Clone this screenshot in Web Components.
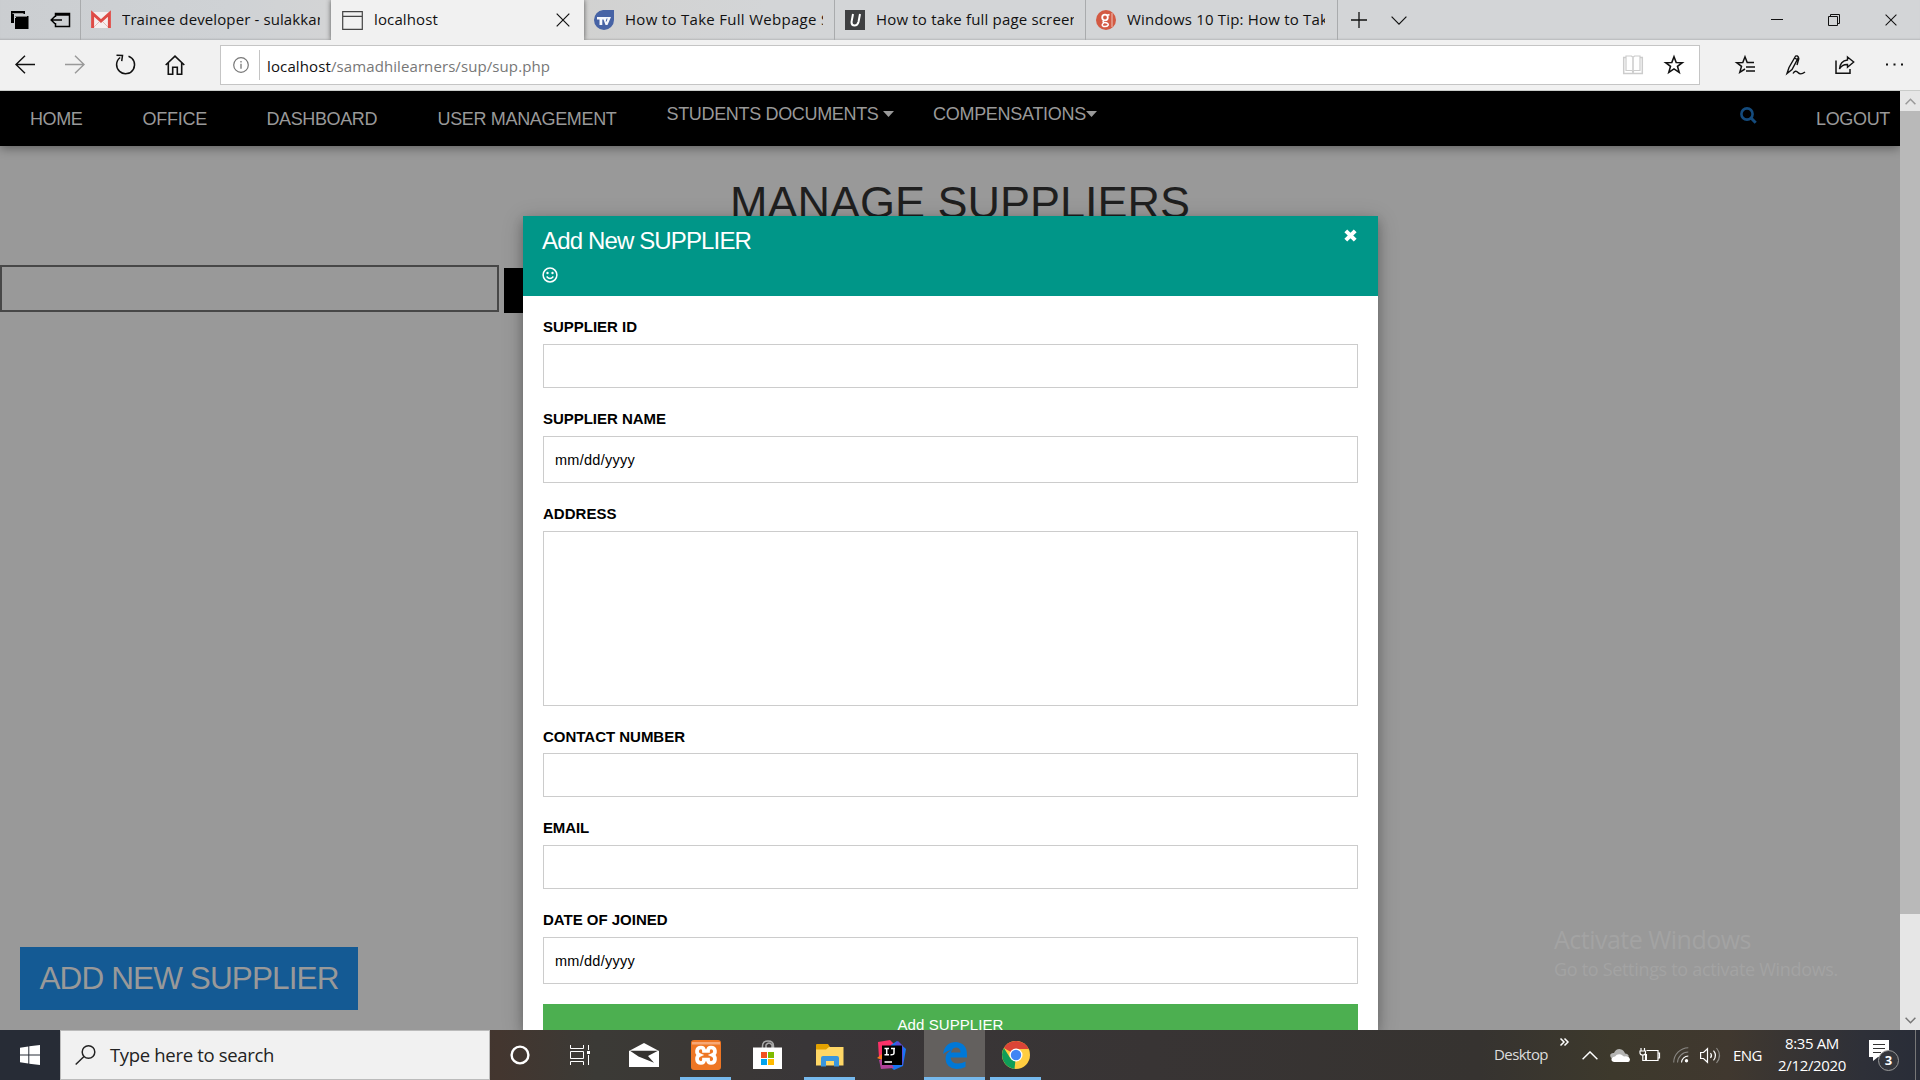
<!DOCTYPE html>
<html lang="en"><head><meta charset="utf-8"><title>localhost</title>
<style>
html,body{margin:0;height:100%;overflow:hidden}
body{font-family:"Liberation Sans",Arial,sans-serif;color:#000}
</style></head><body>
<desktop-screen></desktop-screen>
<script>
const UI='"Open Sans","Noto Sans",sans-serif';
const define=(name,html,after)=>customElements.define(name,class extends HTMLElement{
  connectedCallback(){
    if(this.shadowRoot)return;
    const t=document.createElement('template');
    t.innerHTML=typeof html==='function'?html(this):html;
    this.attachShadow({mode:'open'}).append(t.content.cloneNode(true));
    if(after)after(this);
  }
});

/* Single line of text tracked to a set width: w = text width, box = clip width, gap = space before */
define('fit-text',e=>`<style>
:host{display:block;flex:none;box-sizing:border-box;white-space:nowrap;overflow:${e.hasAttribute('box')?'hidden':'visible'};
width:${e.getAttribute('box')||e.getAttribute('w')}px;margin-left:${e.getAttribute('gap')||0}px;font-size:${e.getAttribute('size')||15}px}
span{display:inline-block;white-space:pre}</style><span><slot></slot></span>`,e=>{
  const s=e.shadowRoot.querySelector('span'),n=e.textContent.length;
  s.style.letterSpacing=((+e.getAttribute('w')-s.getBoundingClientRect().width)/n)+'px';
});

const S='fill="none" stroke="currentColor"';
const ICONS={
tabs:[20,20,`<path d="M1 1h14v3H4v9H1z"/><path d="M6 6h12.500v13H5V8h1z"/><path d="M2.500 3.500h11" stroke="#999" stroke-width="1"/><path d="M5 6.500h12" stroke="#777" stroke-width="1"/>`],
aside:[20,16,`<path d="M5.500 5V1.500h14v13h-14V11M5.500 3h14" ${S} stroke-width="1.500"/><path d="M12 8H1M5 4.300L1.200 8 5 11.700" ${S} stroke-width="1.500"/>`],
gmail:[20,16,`<rect width="20" height="16" rx="1.500" fill="#f5eeee"/><path d="M1.600 16V1.500L10 9l8.400-7.500V16" fill="none" stroke="#de4b46" stroke-width="3"/><path d="M3 15l5-5M17 15l-5-5" stroke="#e6b5b2"/>`],
page:[21,19,`<path d="M.7.700h19.600v17.600H.7zM.7 5.300h19.600" fill="none" stroke="#444" stroke-width="1.200"/>`],
x:[14,14,`<path d="M.7.700l12.600 12.600M13.300.700L.7 13.300" ${S} stroke-width="1.200"/>`],
tv:[20,20,`<path d="M9 0h11v10a10 10 0 0 1-20 0A10 10 0 0 1 9 0z" fill="#4763a5"/><path d="M3 7h14l-3.500 8h-2L9.500 9.500H8.300V15H5.500V9.500H3z" fill="#f5f7fb"/><path d="M13 8.500l-.8 3" stroke="#4763a5"/>`],
u:[20,20,`<path d="M0 0h20v20H0z" fill="#3f4042"/><path d="M8 4L6.500 12q0 3.500 3 3.500t4-3.500L15 4" fill="none" stroke="#fff" stroke-width="2"/>`],
g:[20,20,`<circle cx="10" cy="10" r="10" fill="#d35a43"/><circle cx="9" cy="7.500" r="2.800" fill="none" stroke="#fff" stroke-width="1.800"/><path d="M11 5.500l2.500-1M8 10.500q-2 1.500 0 2 5 .3 4.200 2.500-1.200 2-4.500 1.500-3-1.200 0-3.500" fill="none" stroke="#fff" stroke-width="1.500"/><path d="M16 3v14" stroke="#f0c3b8"/>`],
plus:[16,16,`<path d="M8 0v16M0 8h16" ${S} stroke-width="1.300"/>`],
down:[16,9,`<path d="M.6.700L8 8.100l7.400-7.400" ${S} stroke-width="1.200"/>`],
min:[12,12,`<path d="M0 5.500h12" ${S}/>`],
restore:[12,12,`<path d="M.5 2.500h9v9h-9zM2.500 2V.500h9v9H10" ${S}/>`],
back:[20,19,`<path d="M20 9.500H1M10 .7L1 9.500l9 8.800" ${S} stroke-width="1.400"/>`],
fwd:[20,19,`<path d="M0 9.500h19M10 .7l9 8.800-9 8.800" ${S} stroke-width="1.400"/>`],
reload:[20,21,`<path d="M13.500 2.200A9 9 0 1 1 5.200 3.500" ${S} stroke-width="1.500"/><path d="M1.500 1.200l6 .3-.8 5.700" ${S} stroke-width="1.500"/>`],
home:[20,20,`<path d="M.7 10L10 1.200 19.300 10M3.300 8v11.200h4.400v-7h4.600v7h4.400V8" ${S} stroke-width="1.600"/>`],
info:[16,16,`<circle cx="8" cy="8" r="7.300" ${S} stroke-width="1.200"/><path d="M8 6.800v5M8 4v1.400" ${S} stroke-width="1.300"/>`],
book:[20,20,`<path d="M3 2.500H.7v16h18.600v-16H17M10 3v15" ${S} stroke-width="1.500"/><path d="M3 1h5.500L10 2.500 11.500 1H17v14.500h-6L10 17l-1-1.500H3z" ${S} stroke-width="1.200"/>`],
star:[20,19,`<path d="M10 1.800l2.200 5.700 6.100.2-4.800 3.700 1.700 5.900-5.200-3.400-5.200 3.400 1.700-5.900L1.700 7.700l6.100-.2z" ${S} stroke-width="1.600"/>`],
fav:[20,19,`<path d="M19 7.500h-6.800L10 1.800 7.800 7.500l-6.100.2 4.800 3.700-1.700 5.900L10 14M11 12h9M11 16h9" ${S} stroke-width="1.500"/>`],
pen:[20,20,`<path d="M1 18.500l2-6L9.500 1.200q2-1 3 1.200L6 14.500l-5 4zM8.500 3l3 1.700M13 3l-2 7M7 18.500q2.500-4 5-1t7-.5" ${S} stroke-width="1.400"/>`],
share:[20,18,`<path d="M1 4.500v12.800h14V13" ${S} stroke-width="1.500"/><path d="M12.500 1l6.200 5-6.200 5.200V8.500Q7 8.300 4.500 13 5 5 12.500 4z" ${S} stroke-width="1.400"/>`],
dots:[19,3,`<path d="M1 .500h2v2H1zM8.500.500h2v2h-2zM16 .500h2v2h-2z"/>`],
caret:[11,6,`<path d="M0 0h11L5.500 6z"/>`],
find:[17,17,`<circle cx="7" cy="7" r="5.600" ${S} stroke-width="2.600"/><path d="M11 11l4.700 4.700" ${S} stroke-width="3"/>`],
smile:[16,16,`<circle cx="8" cy="8" r="6.900" ${S} stroke-width="1.500"/><circle cx="5.500" cy="6" r="1.200"/><circle cx="10.500" cy="6" r="1.200"/><path d="M4.600 9.500q3.400 4 6.800 0" ${S} stroke-width="1.400"/>`],
close:[13,13,`<path d="M1.800 1.800l9.400 9.400M11.200 1.800L1.800 11.200" ${S} stroke-width="4"/>`],
up:[11,7,`<path d="M.6 6.200l4.900-5 4.900 5" ${S} stroke-width="1.500"/>`],
dn:[11,7,`<path d="M.6.800l4.900 5 4.900-5" ${S} stroke-width="1.500"/>`],
win:[20,20,`<path d="M0 2.700L8.300 1.500v8H0zM9.300 1.300L20 0v9.500H9.300zM0 10.500h8.300v8L0 17.300zM9.300 10.500H20V20L9.300 18.700z"/>`],
lens:[21,20,`<circle cx="13.500" cy="7" r="6.300" ${S} stroke-width="1.500"/><path d="M9 11.500L.7 19.500" ${S} stroke-width="1.500"/>`],
cortana:[20,20,`<circle cx="10" cy="10" r="8.400" ${S} stroke-width="2.400"/>`],
tasks:[21,20,`<path d="M.5 0v3.500h13V0M.5 20v-3.500h13V20M.5 6.500h13v7H.5zM18.500 0v5M18.500 10v10" ${S}/><path d="M17 6h3v3h-3z"/>`],
mail:[30,24,`<path d="M0 8L15 0l15 8v16H0z"/><path d="M1 7.800h28L19 13l6 6.700L9.500 13.500z" fill="#34322f"/>`],
xampp:[30,30,`<rect width="30" height="30" rx="3" fill="#ee7624"/><path d="M1 2h28v2.500H1z" fill="#f7a877"/><path d="M10 7.500c-5 0-5 6-1.500 7.500-3.500 1.500-3.500 8 1.500 8q3 0 3-3.500h4q0 3.500 3 3.500c5 0 5-6.500 1.500-8C25 13.500 25 7.500 20 7.500q-3 0-3 3.500h-4q0-3.500-3-3.500z" fill="none" stroke="#fff" stroke-width="3.700"/>`],
store:[30,30,`<path d="M9.500 9V6q0-5 5.500-5t5.500 5v3M13 8V5q3-4 6 0v3" fill="none" stroke="#aaa" stroke-width="1.500"/><path d="M0 7.500h29v21.500H0z"/><path fill="#f25022" d="M8 12h6v6H8z"/><path fill="#7fba00" d="M15 12h6v6h-6z"/><path fill="#00a4ef" d="M8 19h6v6H8z"/><path fill="#ffb900" d="M15 19h6v6h-6z"/>`],
folder:[28,24,`<path d="M0 2q0-1 1-1h11l2 3h13v18H0z" fill="#e2a100"/><path d="M0 6.500h10l3-2.500h14.500v18.500H0z" fill="#ffd766"/><path d="M5 23.500V15q0-2 2-2h14q2 0 2 2v8.500h-5V18h-8v5.500z" fill="#3a96dd"/>`],
ij:[30,30,`<path d="M1 2L13 0l5 5-2 10L2 18z" fill="#fc3168"/><path d="M14 5l6-4 9 8-3 17-9 4-6-5z" fill="#1775f5"/><path d="M18 4l3-3 5 5v20z" fill="#5a4bd6"/><path d="M0 18l5-4v6z" fill="#f97a20"/><path d="M2 20l9-2 6 10-13 1z" fill="#b0409a"/><path d="M5 5.500h20v19.500H5z" fill="#000"/><path d="M7.500 8.500h4.500M9.700 8.500v6M7.500 14.800h4.500M14 8.500h4M17 8.500V13q0 2-3.500 1.700M7.500 22h7.500" fill="none" stroke="#fff" stroke-width="1.500"/>`],
edge:[26,28,`<path d="M1 13Q3 1 14 1q11 1 11 13v2.500H8.500q.5 6 7.500 6 4 0 7.500-2V26q-4 2-9 2-10.500-1-11-10Q3.500 11.500 10 9 6 9 1 13zm8-1.500h9.500q0-5-4.700-5-4 .5-4.800 5z" fill="#0078d7"/>`],
chrome:[28,28,`<circle cx="14" cy="14" r="14" fill="#ffcd40"/><path d="M14 14L1.900 7A14 14 0 0 1 26.700 8H14z" fill="#db4437"/><path d="M14 14l-1.500 13.900A14 14 0 0 1 1.900 7L8.500 17.500z" fill="#0f9d58"/><circle cx="14" cy="14" r="6.500" fill="#fff"/><circle cx="14" cy="14" r="5.200" fill="#4285f4"/>`],
more:[9,8,`<path d="M.5.500L4 4 .5 7.500M4.500.500L8 4 4.500 7.500" ${S} stroke-width="1.500"/>`],
cloud:[20,13,`<path d="M4 10Q-.5 9 .3 5.500 1.500 3.500 4 4 6-.5 10.500.2 14 1 15 4.500q3 0 4 3z" fill="#b4b4b2"/><path d="M4 13Q1 12.500 1.500 9.500 3 7.500 5 7.500 7 4.500 11 5.500l3 2q5-1 6 3-.3 2.500-2 2.500z"/>`],
battery:[20,14,`<path d="M6.500 2.500h11.500v10H5.500V9M18.500 5h1v5h-1M1 0v2.500M4.500 0v2.500M0 3h5.500v2q0 2-2.700 2T0 5zM2.800 7v5.500H6" ${S} stroke-width="1.200"/><path d="M5 6h2v6H5z"/>`],
wifi:[16,16,`<path d="M.7 15.500A15 15 0 0 1 15.300.700M4.500 15.500A11 11 0 0 1 15.300 5" ${S} style="stroke:#8a8884" stroke-width="1.100"/><path d="M8.500 15.500a7 7 0 0 1 6.800-6.500" ${S} stroke-width="1.100"/><circle cx="13.500" cy="13.800" r="1.700"/>`],
sound:[21,17,`<path d="M.6 5.500H3.500L7.500 1.700v13.600L3.500 11.500H.6z" ${S} stroke-width="1.200"/><path d="M10.500 6q2 2.500 0 5M13.500 3.700q4 4.800 0 9.600" ${S} stroke-width="1.200"/><path d="M16.500 1q6 7.500 0 15" ${S} style="stroke:#8a8884" stroke-width="1.200"/>`]
};
/* Vector icon: name picks the drawing, gap = space before, w/h override the drawn size */
define('ui-icon',e=>{const[w,h,p]=ICONS[e.getAttribute('name')],W=e.getAttribute('w')||w,H=e.getAttribute('h')||h;
return`<style>:host{display:block;flex:none;width:${W}px;height:${H}px;margin-left:${e.getAttribute('gap')||0}px}svg{display:block;overflow:visible}</style><svg width="${W}" height="${H}" viewBox="0 0 ${w} ${h}" fill="currentColor">${p}</svg>`});

define('browser-tab',e=>`<style>
:host{display:flex;align-items:center;flex:none;box-sizing:border-box;width:${e.getAttribute('width')}px;height:40px;padding-left:11px;border-right:1px solid #a9abad}
:host([active]){background:#f1f1f1;border:0;box-shadow:0 0 5px #0009;clip-path:inset(0 -6px 0 -6px)}
::slotted(fit-text){padding-bottom:2px}
</style><ui-icon name="${e.getAttribute('icon')}"></ui-icon><slot></slot>`);

define('tab-strip',`<style>
:host{display:flex;align-items:center;height:40px;font-family:${UI};color:#111;background:linear-gradient(90deg,#cbced1,#cfd2d5 12%,#d3d4d5 17%,#d0ceca 20%,#d3d5d7 40%,#d3d5d7);box-shadow:inset 0 -2px 2px -1px #0002}
.left{display:flex;align-items:center;box-sizing:border-box;width:81px;height:40px;border-right:1px solid #a9abad;color:#000}
</style>
<div class="left"><ui-icon name="tabs" gap="10"></ui-icon><ui-icon name="aside" gap="20"></ui-icon></div>
<browser-tab width="250" icon="gmail" style="border:0;padding-left:10px"><fit-text gap="11" w="201" box="198">Trainee developer - sulakkar</fit-text></browser-tab>
<browser-tab active width="253" icon="page" style="z-index:1"><fit-text gap="11" w="64">localhost</fit-text><ui-icon name="x" gap="118"></ui-icon></browser-tab>
<browser-tab width="251" icon="tv" style="padding-left:10px"><fit-text gap="11" w="204.500" box="198">How to Take Full Webpage S</fit-text></browser-tab>
<browser-tab width="251" icon="u" style="padding-left:10px"><fit-text gap="11" w="203" box="198">How to take full page screen</fit-text></browser-tab>
<browser-tab width="252" icon="g" style="padding-left:10px"><fit-text gap="11" w="201" box="198">Windows 10 Tip: How to Tak</fit-text></browser-tab>
<ui-icon name="plus" gap="13"></ui-icon><ui-icon name="down" gap="24"></ui-icon>
<ui-icon name="min" gap="364"></ui-icon><ui-icon name="restore" gap="45"></ui-icon><ui-icon name="x" w="12" h="12" gap="45"></ui-icon>`);

define('address-bar',`<style>
:host{display:flex;align-items:center;height:50px;border-bottom:1px solid #c9cbc9;background:#f1f1f1;font-family:${UI};color:#111}
.box{display:flex;align-items:center;box-sizing:border-box;width:1480px;height:40px;border:1px solid #c5c5c5;background:#fff;margin-left:35px}
.box i{width:1px;height:30px;background:#c4c4c4;margin-left:10px}
.g{color:#777}
.box fit-text{padding-top:2px}
ui-icon{margin-bottom:1px}
</style>
<ui-icon name="back" gap="15"></ui-icon><ui-icon name="fwd" gap="30" style="color:#999"></ui-icon><ui-icon name="reload" gap="30"></ui-icon><ui-icon name="home" gap="30"></ui-icon>
<div class="box"><ui-icon name="info" gap="12" style="color:#777"></ui-icon><i></i><fit-text gap="7" w="64">localhost</fit-text><fit-text class="g" w="219">/samadhilearners/sup/sup.php</fit-text>
<ui-icon name="book" gap="1073" style="color:#ccc"></ui-icon><ui-icon name="star" gap="21"></ui-icon></div>
<ui-icon name="fav" gap="35"></ui-icon><ui-icon name="pen" gap="31"></ui-icon><ui-icon name="share" gap="29"></ui-icon><ui-icon name="dots" gap="30"></ui-icon>`);

define('site-nav',`<style>
:host{display:flex;align-items:center;height:55px;background:#000;color:#999;box-shadow:0 2px 10px #0006}
.up{display:flex;align-items:center;padding-bottom:9px}
.lo{padding-top:2px}
</style>
<fit-text class="lo" size="18" gap="30" w="52.500">HOME</fit-text><fit-text class="lo" size="18" gap="60" w="64.500">OFFICE</fit-text><fit-text class="lo" size="18" gap="59.500" w="110.500">DASHBOARD</fit-text><fit-text class="lo" size="18" gap="60.500" w="179">USER MANAGEMENT</fit-text>
<div class="up"><fit-text size="18" gap="50" w="212">STUDENTS DOCUMENTS</fit-text><ui-icon name="caret" gap="4.500"></ui-icon><fit-text size="18" gap="39" w="153">COMPENSATIONS</fit-text><ui-icon name="caret"></ui-icon></div>
<div class="up" style="padding-bottom:6px"><ui-icon name="find" gap="643" style="color:#144b7d"></ui-icon></div>
<fit-text class="lo" size="18" gap="59" w="74">LOGOUT</fit-text>`);

define('form-field',e=>`<style>
:host{display:block;font-size:15px}
b{display:flex;align-items:center;height:22px;font-weight:bold}
div{box-sizing:border-box;display:flex;align-items:center;height:${e.getAttribute('h')}px;border:1px solid #ccc;padding:0 11px;margin-top:${e.getAttribute('drop')||7}px}
</style><b><fit-text w="${e.getAttribute('w')}">${e.getAttribute('label')}</fit-text></b><div><slot></slot></div>`);

define('supplier-dialog',`<style>
:host{display:block;width:855px;height:814px;background:#fff;overflow:hidden}
header{display:flex;justify-content:space-between;height:80px;box-sizing:border-box;background:#009688;color:#fff;padding:11px 21px 0 19px}
header ui-icon{margin-top:2px}
.t{line-height:27px}
.t ui-icon{margin-top:13px}
main{padding:19px 20px 0;display:flex;flex-direction:column}
button{border:0;background:#4caf50;color:#fff;height:40px;margin-top:20px;padding:0;display:flex;align-items:center;justify-content:center;font:15px/1 "Liberation Sans",Arial,sans-serif}
</style>
<header><div class="t"><fit-text size="24" w="209">Add New SUPPLIER</fit-text><ui-icon name="smile"></ui-icon></div><ui-icon name="close"></ui-icon></header>
<main>
<form-field label="SUPPLIER ID" w="94" h="44" drop="7"></form-field>
<form-field label="SUPPLIER NAME" w="123" h="47" style="margin-top:19px"><fit-text w="80" size="14.500">mm/dd/yyyy</fit-text></form-field>
<form-field label="ADDRESS" w="73.500" h="175" style="margin-top:19px" drop="7"></form-field>
<form-field label="CONTACT NUMBER" w="142" h="44" style="margin-top:19px" drop="6"></form-field>
<form-field label="EMAIL" w="46" h="44" style="margin-top:19px" drop="7"></form-field>
<form-field label="DATE OF JOINED" w="124.500" h="47" style="margin-top:19px"><fit-text w="80" size="14.500">mm/dd/yyyy</fit-text></form-field>
<button><fit-text w="106" size="15">Add SUPPLIER</fit-text></button>
</main>`);

define('page-scrollbar',`<style>
:host{display:flex;flex-direction:column;width:20px;background:#e6e6e6}
div{height:20px;display:flex;align-items:center;justify-content:center;color:#999}
.thumb{height:803px;background:#b9b9b9}.sp{flex:1}
</style><div><ui-icon name="up"></ui-icon></div><div class="thumb"></div><div class="sp"></div><div style="color:#777"><ui-icon name="dn"></ui-icon></div>`);

define('supplier-page',`<style>
:host{display:flex;height:939px}
.page{flex:1;display:flex;flex-direction:column;background:#999;position:relative;overflow:hidden}
h1{margin:32px 0 0;height:50px;line-height:50px;font-weight:normal;color:#1f1f1f;display:flex;padding-left:730px}
.row{display:flex;align-items:flex-start;margin-top:37px}
.in{box-sizing:border-box;width:499px;height:47px;border:2px solid #474747}
.go{width:60px;height:45px;background:#000;margin:3px 0 0 5px}
.sp{flex:1}
.add{width:338px;height:63px;margin:0 0 20px 20px;background:#145a94;color:#999;display:flex;align-items:center;justify-content:center}
.shade{position:absolute;left:523px;top:125px;box-shadow:0 4px 10px #0003,0 4px 20px #00000038}
.mark{position:absolute;left:1554px;top:829px;font-family:${UI};color:#a3a3a3}
</style>
<div class="page"><site-nav></site-nav>
<h1><fit-text size="45" w="460">MANAGE SUPPLIERS</fit-text></h1>
<div class="row"><div class="in"></div><div class="go"></div></div><div class="sp"></div>
<div class="add"><fit-text size="31.500" w="299">ADD NEW SUPPLIER</fit-text></div>
<div class="mark"><fit-text size="25" w="197" style="line-height:38px">Activate Windows</fit-text><fit-text size="18" w="284" style="line-height:22px">Go to Settings to activate Windows.</fit-text></div>
<supplier-dialog class="shade"></supplier-dialog></div>
<page-scrollbar></page-scrollbar>`);

define('task-button',e=>`<style>
:host{display:flex;align-items:center;justify-content:center;flex:none;width:51px;height:50px;box-sizing:border-box;margin-left:${e.getAttribute('gap')||0}px}
:host([open]){box-shadow:inset 0 -3px #76b9ed}
:host([current]){width:61px;background:#63605e}
</style><ui-icon name="${e.getAttribute('icon')}"></ui-icon>`);

define('task-bar',`<style>
:host{display:flex;align-items:center;height:50px;color:#fff;font-family:${UI};background:linear-gradient(90deg,#272c36 0,#272c36 3%,#43362f 26%,#3b3a36 31%,#3b3835 36%,#393638 42%,#383434 60%,#363330 77%,#3d392c 84%,#40382f 90%,#2e3038 97%,#292d38)}
.start{display:flex;width:60px;justify-content:center}
.find{display:flex;align-items:center;width:430px;height:50px;box-sizing:border-box;border:1px solid #bbb;background:#f1f1f1;color:#222}
.find fit-text{padding-bottom:2px}
.clock{display:flex;flex-direction:column;align-items:center;width:70px;margin-left:15px;line-height:22px;height:47px}
.note{position:relative;margin-left:22px;width:30px;height:30px;padding-bottom:0}
.note svg{display:block}
.badge{position:absolute;left:9px;top:10px;width:19px;height:19px;border:1px solid #999;border-radius:50%;background:#34363c;font-size:13px;font-weight:bold;line-height:19px;text-align:center}
.edge{width:1px;height:50px;background:#777;margin-left:16px}
</style>
<div class="start"><ui-icon name="win"></ui-icon></div>
<div class="find"><ui-icon name="lens" gap="14"></ui-icon><fit-text gap="14" w="164" size="18.500">Type here to search</fit-text></div>
<ui-icon name="cortana" gap="20"></ui-icon><ui-icon name="tasks" gap="40"></ui-icon>
<task-button icon="mail" gap="27"></task-button><task-button icon="xampp" gap="11" open></task-button><task-button icon="store" gap="11"></task-button><task-button icon="folder" gap="11" open></task-button><task-button icon="ij" gap="11"></task-button><task-button icon="edge" gap="7" open current></task-button><task-button icon="chrome" gap="5" open></task-button>
<fit-text gap="453" w="54" style="color:#ddd;padding-bottom:2px">Desktop</fit-text><ui-icon name="more" gap="12" style="margin-bottom:27px"></ui-icon>
<svg style="margin-left:13px" width="16" height="9" fill="none" stroke="#fff" stroke-width="1.400"><path d="M.6 8.300L8 .900l7.400 7.400"/></svg>
<ui-icon name="cloud" gap="12"></ui-icon><ui-icon name="battery" gap="10"></ui-icon><ui-icon name="wifi" gap="13"></ui-icon><ui-icon name="sound" gap="11"></ui-icon>
<fit-text gap="12" w="29" style="padding-bottom:1px">ENG</fit-text>
<div class="clock"><fit-text w="54">8:35 AM</fit-text><fit-text w="68">2/12/2020</fit-text></div>
<div class="note"><svg width="20" height="22"><path d="M0 0h20v17H9l-5 4v-4H0z" fill="#fff"/><path d="M4 4.500h12M4 8.500h12M4 12.500h8" stroke="#333"/></svg><div class="badge">3</div></div>
<div class="edge"></div>`);

define('desktop-screen',`<style>:host{display:flex;flex-direction:column;width:1920px;height:1080px;overflow:hidden}</style>
<tab-strip></tab-strip><address-bar></address-bar><supplier-page></supplier-page><task-bar></task-bar>`);
</script></body></html>
